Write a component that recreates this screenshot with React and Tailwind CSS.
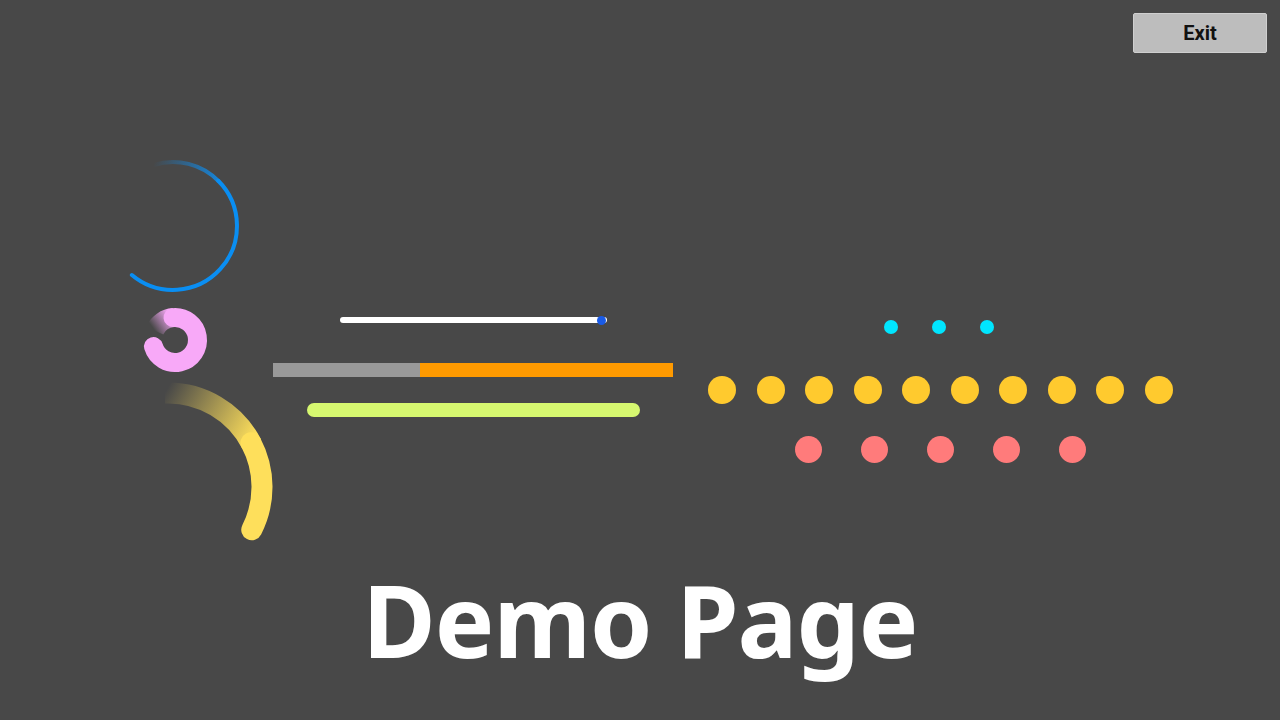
import React from 'react';

// point on a circle, angle in degrees (0 = right, grows clockwise on screen)
function pt(cx, cy, r, a) {
  const rad = (a * Math.PI) / 180;
  return [cx + r * Math.cos(rad), cy + r * Math.sin(rad)];
}

function arc(cx, cy, r, from, to) {
  const [x0, y0] = pt(cx, cy, r, from);
  const [x1, y1] = pt(cx, cy, r, to);
  const large = to - from > 180 ? 1 : 0;
  return `M${x0.toFixed(2)} ${y0.toFixed(2)} A${r} ${r} 0 ${large} 1 ${x1.toFixed(2)} ${y1.toFixed(2)}`;
}

function Spinner({ id, box, cx, cy, r, width, color, tailColor, tail, solid }) {
  const [x1, y1] = pt(cx, cy, r, tail[0]);
  const [x2, y2] = pt(cx, cy, r, tail[1]);
  return (
    <svg width={box[2]} height={box[3]} viewBox={box.join(' ')} fill="none">
      <defs>
        <linearGradient id={id} gradientUnits="userSpaceOnUse" x1={x1} y1={y1} x2={x2} y2={y2}>
          <stop offset="0" stopColor={tailColor} stopOpacity="0" />
          <stop offset="1" stopColor={tailColor} stopOpacity="1" />
        </linearGradient>
      </defs>
      <path d={arc(cx, cy, r, tail[0], tail[1] + 1)} stroke={`url(#${id})`} strokeWidth={width} fill="none" />
      <path d={arc(cx, cy, r, solid[0], solid[1])} stroke={color} strokeWidth={width} strokeLinecap="round" fill="none" />
    </svg>
  );
}

const YELLOW_DOTS = Array.from({ length: 10 });
const RED_DOTS = Array.from({ length: 5 });
const CYAN_DOTS = Array.from({ length: 3 });

export default function App() {
  return (
    <div className="h-[720px] w-full overflow-hidden bg-[#484848] font-['Roboto',sans-serif]">
      {/* top bar */}
      <div className="flex justify-end px-[13px] pt-[13px]">
        <button
          type="button"
          className="h-[40px] w-[134px] rounded-[2px] border border-[#cfcfcf] bg-[#bdbdbd] text-[20px] font-bold text-[#111111]"
        >
          Exit
        </button>
      </div>

      {/* demo widgets */}
      <div className="mt-[97px] flex">
        {/* spinners */}
        <div className="ml-[100px] flex w-[173px] flex-col">
          <Spinner
            id="blueTail"
            box={[100, 150, 150, 150]}
            cx={173}
            cy={226}
            r={64}
            width={4}
            color="#0a8ef2"
            tailColor="#1684d8"
            tail={[252, 315]}
            solid={[315, 490]}
          />
          <div className="ml-[35px]">
            <Spinner
              id="pinkTail"
              box={[135, 300, 80, 80]}
              cx={175}
              cy={340}
              r={22.5}
              width={19}
              color="#f8a9f8"
              tailColor="#f8a9f8"
              tail={[205, 265]}
              solid={[265, 523]}
            />
          </div>
          <div className="ml-[40px]">
            <Spinner
              id="yellowTail"
              box={[140, 380, 150, 165]}
              cx={168}
              cy={487}
              r={94}
              width={21}
              color="#fedf5b"
              tailColor="#fedf5b"
              tail={[268, 332]}
              solid={[332, 387]}
            />
          </div>
        </div>

        {/* bars */}
        <div className="flex w-[400px] flex-col pt-[167px]">
          <div className="ml-[67px] flex h-[6px] w-[267px] items-center justify-end rounded-full bg-white">
            <div className="mr-[1px] h-[9px] w-[9px] rounded-full bg-[#1a5be6]" />
          </div>
          <div className="mt-[40px] flex h-[14px] w-[400px]">
            <div className="w-[147px] bg-[#999999]" />
            <div className="flex-1 bg-[#ff9a00]" />
          </div>
          <div className="ml-[34px] mt-[26px] h-[14px] w-[333px] rounded-full bg-[#d6f870]" />
        </div>

        {/* dots */}
        <div className="ml-[35px] flex w-[465px] flex-col items-center pt-[170px]">
          <div className="mr-[4px] flex gap-[34px]">
            {CYAN_DOTS.map((_, i) => (
              <div key={i} className="h-[14px] w-[14px] rounded-full bg-[#00e6ff]" />
            ))}
          </div>
          <div className="mt-[42px] flex gap-[20.5px]">
            {YELLOW_DOTS.map((_, i) => (
              <div key={i} className="h-[28px] w-[28px] rounded-full bg-[#ffca2e]" />
            ))}
          </div>
          <div className="mt-[32px] flex gap-[39px]">
            {RED_DOTS.map((_, i) => (
              <div key={i} className="h-[27px] w-[27px] rounded-full bg-[#ff7b7b]" />
            ))}
          </div>
        </div>
      </div>

      {/* title */}
      <h1 className="mt-[24px] text-center font-['Noto_Sans',sans-serif] text-[100px] font-bold leading-none tracking-[-1px] text-white">
        Demo Page
      </h1>
    </div>
  );
}
